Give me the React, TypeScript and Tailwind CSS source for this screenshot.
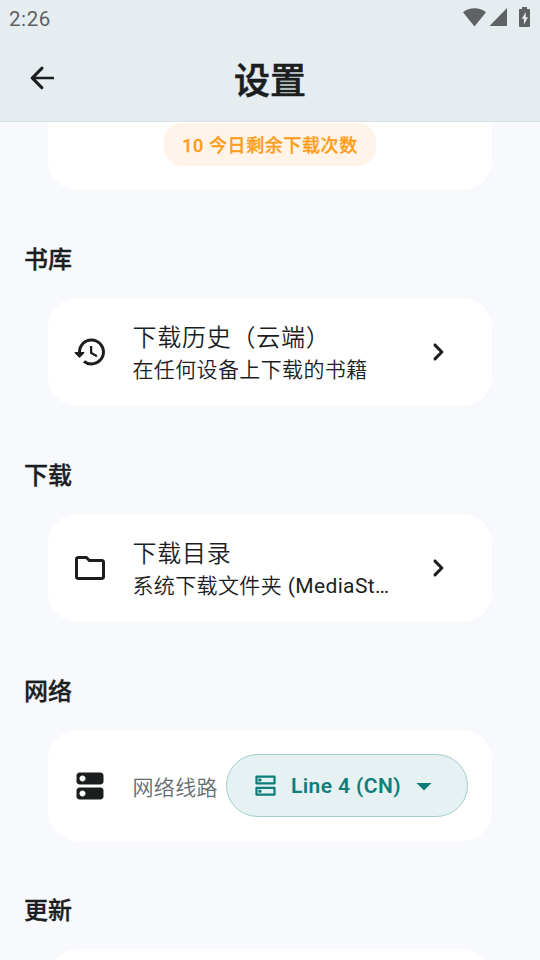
import type { ReactNode } from 'react';

type IconProps = { d: string; className: string };

function Icon({ d, className }: IconProps) {
  return (
    <svg viewBox="0 0 24 24" fill="currentColor" fillRule="evenodd" className={'shrink-0 ' + className}>
      <path d={d} />
    </svg>
  );
}

const paths = {
  back: 'M19.6 11.1H7.83l4.88-4.98c.39-.39.39-1.03 0-1.42a1 1 0 0 0-1.41 0l-6.59 6.59a1 1 0 0 0 0 1.41l6.59 6.59a1 1 0 0 0 1.41-1.41L7.83 12.9H19.6a.4.4 0 0 0 .4-.4v-1a.4.4 0 0 0-.4-.4Z',
  history:
    'M13.26 3C8.17 2.86 4 6.95 4 12H2.21c-.45 0-.67.54-.35.85l2.79 2.8c.2.2.51.2.71 0l2.79-2.8c.31-.31.09-.85-.36-.85H6c0-3.9 3.18-7.05 7.1-7 3.72.05 6.85 3.18 6.9 6.9.05 3.91-3.1 7.1-7 7.1-1.61 0-3.1-.55-4.28-1.48L7.3 18.94A8.858 8.858 0 0 0 13 21c5.05 0 9.14-4.17 9-9.26-.13-4.69-4.05-8.61-8.74-8.74zM12 8v5l4.25 2.52.77-1.28-3.52-2.09V8z',
  folder:
    'M9.17 6l2 2H20v10H4V6h5.17M10 4H4c-1.1 0-1.99.9-1.99 2L2 18c0 1.1.9 2 2 2h16c1.1 0 2-.9 2-2V8c0-1.1-.9-2-2-2h-8l-2-2z',
  dns: 'M19 13H5c-1.1 0-2 .9-2 2v4c0 1.1.9 2 2 2h14c1.1 0 2-.9 2-2v-4c0-1.1-.9-2-2-2zM7 19c-1.1 0-2-.9-2-2s.9-2 2-2 2 .9 2 2-.9 2-2 2zM19 3H5c-1.1 0-2 .9-2 2v4c0 1.1.9 2 2 2h14c1.1 0 2-.9 2-2V5c0-1.1-.9-2-2-2zM7 9c-1.1 0-2-.9-2-2s.9-2 2-2 2 .9 2 2-.9 2-2 2z',
  dnsOutline:
    'M19 15v4H5v-4h14m1-2H4c-.55 0-1 .45-1 1v6c0 .55.45 1 1 1h16c.55 0 1-.45 1-1v-6c0-.55-.45-1-1-1zM7 18.5c-.82 0-1.5-.67-1.5-1.5s.68-1.5 1.5-1.5 1.5.67 1.5 1.5-.67 1.5-1.5 1.5zM19 5v4H5V5h14m1-2H4c-.55 0-1 .45-1 1v6c0 .55.45 1 1 1h16c.55 0 1-.45 1-1V4c0-.55-.45-1-1-1zM7 8.5c-.82 0-1.5-.67-1.5-1.5S6.18 5.5 7 5.5s1.5.68 1.5 1.5S7.83 8.5 7 8.5z',
  chevron:
    'M9.29 6.71a.996.996 0 0 0 0 1.41L13.17 12l-3.88 3.88a.996.996 0 1 0 1.41 1.41l4.59-4.59a.996.996 0 0 0 0-1.41L10.7 6.7c-.38-.38-1.02-.38-1.41.01z',
  dropDown: 'M7 10l5 5 5-5z',
};

function StatusBar() {
  return (
    <div className="flex h-9 items-center justify-between pl-[9px] pr-[10px] text-[#5e6263]">
      <span className="pt-[2px] text-[20.5px] font-[450] leading-none tracking-[0.6px]">2:26</span>
      <div className="flex items-center pb-[2px]">
        <svg viewBox="0 0 23 19" className="h-[19px] w-[23px]" fill="currentColor">
          <path d="M0 4.2C6.2-1 16.8-1 23 4.2L11.5 18.5z" />
        </svg>
        <svg viewBox="0 0 18 18" className="ml-[3px] h-[18px] w-[18px]" fill="currentColor">
          <path d="M18 0v17.3a.7.7 0 0 1-.7.7H.5z" />
        </svg>
        <svg viewBox="0 0 11 20" className="ml-3 h-5 w-[11px]" fill="currentColor" fillRule="evenodd">
          <path d="M3 0h5v2h2a1 1 0 0 1 1 1v16a1 1 0 0 1-1 1H1a1 1 0 0 1-1-1V3a1 1 0 0 1 1-1h2zM6.8 5L2.8 11.8h2.1V17.5L9 10.2H6.6z" />
        </svg>
      </div>
    </div>
  );
}

function SectionTitle({ children }: { children: ReactNode }) {
  return (
    <h2 className="flex h-[108px] items-center pl-6 pt-[32px] text-[24px] font-medium leading-9 [-webkit-text-stroke:0.35px]">
      {children}
    </h2>
  );
}

function SettingRow({ icon, title, subtitle }: { icon: string; title: string; subtitle: ReactNode }) {
  return (
    <div className="mx-12 flex h-[108px] items-center rounded-[30px] bg-white px-6">
      <Icon d={icon} className="size-9" />
      <div className="ml-[24.5px] w-[258px] shrink-0 whitespace-nowrap font-[350]">
        <div className="pt-[2px] text-[24px] leading-[34px] tracking-[0.75px]">{title}</div>
        <div className="text-[21px] leading-[31px] tracking-[0.375px]">{subtitle}</div>
      </div>
      <Icon d={paths.chevron} className="ml-[29.5px] size-9" />
    </div>
  );
}

export default function App() {
  return (
    <div className="flex h-[960px] w-[540px] flex-col overflow-hidden bg-[#f8f9fd] font-[Roboto,'Noto_Sans_CJK_SC',sans-serif] text-[#1b1e1f]">
      <header className="h-[121px] shrink-0 bg-[#e5edf0] shadow-[0_1px_0_#d9e1e5]">
        <StatusBar />
        <div className="grid h-[84px] grid-cols-[84px_1fr_84px] items-center">
          <Icon d={paths.back} className="ml-6 size-9" />
          <h1 className="pt-[8px] text-center text-[36px] font-medium leading-none [-webkit-text-stroke:0.6px]">设置</h1>
        </div>
      </header>
      <main className="flex-1 overflow-hidden pt-px">
        <div className="mx-12 flex h-[68px] justify-center rounded-b-[30px] bg-white pt-px">
          <div className="flex h-[43px] w-[212px] items-center justify-center rounded-[18px] bg-[#fff4e7] pt-[2px] text-[18px] font-medium tracking-[0.6px] text-[#fd9d1b] [-webkit-text-stroke:0.3px]">
            10 今日剩余下载次数
          </div>
        </div>
        <SectionTitle>书库</SectionTitle>
        <SettingRow icon={paths.history} title="下载历史（云端）" subtitle="在任何设备上下载的书籍" />
        <SectionTitle>下载</SectionTitle>
        <SettingRow
          icon={paths.folder}
          title="下载目录"
          subtitle={
            <>
              系统下载文件夹 <span className="font-normal">(MediaSt…</span>
            </>
          }
        />
        <SectionTitle>网络</SectionTitle>
        <div className="mx-12 flex h-[111px] items-center rounded-[30px] bg-white px-6">
          <Icon d={paths.dns} className="size-9" />
          <span className="ml-[24.5px] w-[93.5px] shrink-0 whitespace-nowrap pt-[6px] text-[21px] font-[350] tracking-[0.375px] text-[#646b72]">
            网络线路
          </span>
          <button className="flex h-[63px] w-[242px] shrink-0 items-center rounded-full border-[1.5px] border-[#a5cdcc] bg-[#e5f1f2] pl-[24.5px] text-[#0f7e7b]">
            <Icon d={paths.dnsOutline} className="size-[27px]" />
            <span className="ml-[12.5px] whitespace-nowrap pt-[2px] text-[21px] font-semibold tracking-[0.4px]">Line 4 (CN)</span>
            <Icon d={paths.dropDown} className="ml-[5.5px] size-9" />
          </button>
        </div>
        <SectionTitle>更新</SectionTitle>
        <div className="mx-12 h-[111px] rounded-[30px] bg-white" />
      </main>
    </div>
  );
}
